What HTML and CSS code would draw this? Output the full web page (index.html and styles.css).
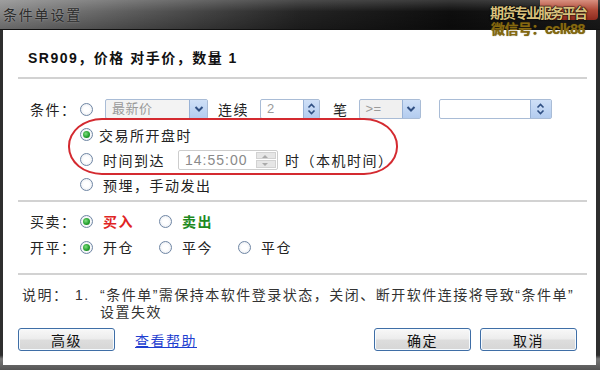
FILE: index.html
```html
<!DOCTYPE html>
<html lang="zh-CN">
<head>
  <meta charset="UTF-8">
  <title>条件单设置</title>
  <link rel="stylesheet" href="styles.css">
</head>
<body>
  <div class="window">
    <div class="titlebar">
      <span class="title">条件单设置</span>
      <span class="close-btn"></span>
      <div class="watermark">
        <div class="wm1">期货专业服务平台</div>
        <div class="wm2">微信号：cclk88</div>
      </div>
    </div>

    <div class="client">
      <div class="head">SR909，价格 对手价，数量 1</div>
      <div class="sep"></div>

      <!-- 条件 -->
      <div class="cond">
        <div class="row row-first">
          <span class="label">条件：</span>
          <span class="radio"></span>
          <span class="select select-price">
            <span class="val">最新价</span>
            <span class="drop">
              <svg width="10" height="8" viewBox="0 0 10 8"><path d="M1.5 2 L5 5.5 L8.5 2" fill="none" stroke="#2f4f82" stroke-width="2"/></svg>
            </span>
          </span>
          <span class="txt t-lianxu">连续</span>
          <span class="spin spin-count">
            <span class="val">2</span>
            <span class="spin-btn">
              <svg width="9" height="12" viewBox="0 0 9 12"><path d="M1.5 4.5 L4.5 1.5 L7.5 4.5 M1.5 7.5 L4.5 10.5 L7.5 7.5" fill="none" stroke="#2f4f82" stroke-width="1.6"/></svg>
            </span>
          </span>
          <span class="txt t-bi">笔</span>
          <span class="select select-op">
            <span class="val">&gt;=</span>
            <span class="drop">
              <svg width="10" height="8" viewBox="0 0 10 8"><path d="M1.5 2 L5 5.5 L8.5 2" fill="none" stroke="#2f4f82" stroke-width="2"/></svg>
            </span>
          </span>
          <span class="spin spin-price">
            <span class="val"></span>
            <span class="spin-btn">
              <svg width="9" height="12" viewBox="0 0 9 12"><path d="M1.5 4.5 L4.5 1.5 L7.5 4.5 M1.5 7.5 L4.5 10.5 L7.5 7.5" fill="none" stroke="#2f4f82" stroke-width="1.6"/></svg>
            </span>
          </span>
        </div>
        <div class="row indent">
          <span class="radio checked"></span>
          <span class="txt t-tight">交易所开盘时</span>
        </div>
        <div class="row indent">
          <span class="radio"></span>
          <span class="txt t-gap">时间到达</span>
          <span class="spin spin-time">
            <span class="val">14:55:00</span>
            <span class="spin-grey">
              <span class="up"></span>
              <span class="down"></span>
            </span>
          </span>
          <span class="txt t-local">时（本机时间）</span>
        </div>
        <div class="row indent">
          <span class="radio"></span>
          <span class="txt t-gap">预埋，手动发出</span>
        </div>
        <div class="highlight"></div>
      </div>
      <div class="sep"></div>

      <!-- 买卖 / 开平 -->
      <div class="dir">
        <div class="row">
          <span class="label">买卖：</span>
          <span class="opt"><span class="radio checked"></span><span class="txt buy">买入</span></span>
          <span class="opt"><span class="radio"></span><span class="txt sell">卖出</span></span>
        </div>
        <div class="row">
          <span class="label">开平：</span>
          <span class="opt"><span class="radio checked"></span><span class="txt">开仓</span></span>
          <span class="opt"><span class="radio"></span><span class="txt">平今</span></span>
          <span class="opt"><span class="radio"></span><span class="txt">平仓</span></span>
        </div>
      </div>
      <div class="sep"></div>

      <div class="note">
        <span class="note-label">说明：</span>
        <span class="note-num">1.</span>
        <span class="note-text">“条件单”需保持本软件登录状态，关闭、断开软件连接将导致“条件单”<br>设置失效</span>
      </div>

      <div class="actions">
        <button class="btn">高级</button>
        <a class="link" href="#">查看帮助</a>
        <span class="spacer"></span>
        <button class="btn">确定</button>
        <button class="btn btn-cancel">取消</button>
      </div>
    </div>
  </div>
</body>
</html>
```

FILE: styles.css
```css
body {
  margin: 0;
  padding: 0;
  font-family: "Liberation Sans", "Noto Sans CJK SC", sans-serif;
  background: #3a3a3a;
}
.window {
  width: 600px;
  height: 370px;
  position: relative;
  overflow: hidden;
  background: linear-gradient(#2e2e2e, #2e2e2e 96%, #777 97%, #555);
  display: flex;
  flex-direction: column;
}

/* 标题栏 */
.titlebar {
  flex: none;
  height: 30px;
  position: relative;
  box-sizing: border-box;
  border-bottom: 1px solid #111;
  background:
    linear-gradient(rgba(255, 255, 255, 0.18), rgba(255, 255, 255, 0) 40%, rgba(0, 0, 0, 0.25)),
    linear-gradient(90deg, #8a8a8a 0%, #5c5c5c 22%, #242424 50%, #0e0e0e 75%, #1c1c1c 100%);
}
.title {
  display: block;
  padding: 4px 0 0 3px;
  font-size: 14px;
  letter-spacing: 1.8px;
  color: #2c2c2c;
  text-shadow: 0 0 2px rgba(170, 170, 170, 0.9);
}
.close-btn {
  position: absolute;
  top: 0;
  right: 2px;
  width: 58px;
  height: 20px;
  border-radius: 0 0 4px 4px;
  background: linear-gradient(#d89080, #b04a38 50%, #8e2a1e);
}
.watermark {
  position: absolute;
  top: 5px;
  right: 12px;
  width: 100px;
  text-align: center;
  font-weight: bold;
  z-index: 2;
}
.wm1 {
  font-size: 14px;
  letter-spacing: -2px;
  line-height: 16px;
  color: #d8c07c;
  text-shadow: 0 0 1px #000, 0 0 1px #000, 0 0 2px #000;
}
.wm2 {
  font-size: 14px;
  letter-spacing: -0.5px;
  line-height: 16px;
  color: #86690f;
  text-shadow: 0 0 1px #5a4608;
}

/* 内容区 */
.client {
  flex: none;
  height: 335px;
  margin: 0 4px 0 3px;
  background: #fff;
  box-sizing: border-box;
  color: #222;
}
.head {
  height: 47px;
  padding: 7px 0 0 25px;
  box-sizing: border-box;
  display: flex;
  align-items: center;
  font-size: 14px;
  font-weight: bold;
  letter-spacing: 1.5px;
  color: #111;
}
.sep {
  height: 2px;
  margin: 0 9px 0 15px;
  background: #d2d2d2;
}
.row {
  display: flex;
  align-items: center;
  height: 25px;
  font-size: 14px;
  letter-spacing: 1.5px;
  white-space: nowrap;
}
.label {
  flex: none;
  width: 50px;
}
.indent {
  padding-left: 50px;
}

.cond {
  position: relative;
  padding: 17px 0 3px 27px;
}
.row-first {
  height: 26px;
}

/* 单选框 */
.radio {
  flex: none;
  width: 11px;
  height: 11px;
  border: 1px solid #6f86a4;
  border-radius: 50%;
  background: radial-gradient(circle, #fff 35%, #e2e6ec);
  position: relative;
}
.radio.checked::after {
  content: "";
  position: absolute;
  top: 2px;
  left: 2px;
  width: 7px;
  height: 7px;
  border-radius: 50%;
  background: radial-gradient(circle at 40% 40%, #7ee07e, #1f9a2a 60%, #17701f);
}

/* 下拉框、微调框 */
.select,
.spin {
  flex: none;
  display: flex;
  height: 20px;
  box-sizing: border-box;
  border: 1px solid #a9bcd6;
  border-radius: 2px;
  background: #fff;
  font-size: 13px;
  letter-spacing: 0.5px;
  color: #9a9a9a;
}
.val {
  flex: 1;
  padding-left: 6px;
  line-height: 18px;
  overflow: hidden;
}
.drop,
.spin-btn {
  flex: none;
  width: 17px;
  display: flex;
  align-items: center;
  justify-content: center;
  background: linear-gradient(#cfe0f7, #b3ccef);
  border-left: 1px solid #98b2d6;
}
.spin-btn {
  width: 15px;
}
.select-price {
  width: 103px;
  margin-left: 12px;
  background: #f3f3f3;
}
.t-lianxu {
  margin-left: 10px;
}
.spin-count {
  width: 60px;
  margin-left: 11px;
}
.t-bi {
  margin-left: 13px;
}
.select-op {
  width: 62px;
  margin-left: 10px;
  background: #f0f0f0;
}
.spin-price {
  width: 113px;
  margin-left: 18px;
}
.spin-price .spin-btn {
  width: 20px;
}
.spin-time {
  width: 100px;
  margin-left: 13px;
  border-color: #cdcdcd;
  font-size: 14px;
  letter-spacing: 1px;
  color: #8a8a8a;
}
.spin-grey {
  flex: none;
  width: 20px;
  display: flex;
  flex-direction: column;
  padding: 1px;
  gap: 1px;
}
.spin-grey span {
  flex: 1;
  background: #e6e6e6;
  border: 1px solid #d2d2d2;
  position: relative;
}
.spin-grey .up::after,
.spin-grey .down::after {
  content: "";
  position: absolute;
  left: 5px;
  border-left: 3px solid transparent;
  border-right: 3px solid transparent;
}
.spin-grey .up::after {
  top: 2px;
  border-bottom: 3px solid #aaa;
}
.spin-grey .down::after {
  top: 2px;
  border-top: 3px solid #aaa;
}
.t-tight {
  margin-left: 6px;
}
.t-gap {
  margin-left: 10px;
}
.t-local {
  margin-left: 7px;
}

/* 红色标注 */
.highlight {
  position: absolute;
  left: 65px;
  top: 39px;
  width: 330px;
  height: 57px;
  box-sizing: border-box;
  border: 2px solid #d42a30;
  border-radius: 34px / 28px;
}

/* 买卖 / 开平 */
.dir {
  padding: 6px 0 13px 27px;
}
.dir .row {
  height: 26px;
}
.opt {
  flex: none;
  width: 79px;
  display: flex;
  align-items: center;
}
.opt .txt {
  margin-left: 10px;
}
.buy {
  color: #e02424;
  font-weight: bold;
}
.sell {
  color: #1e8a1e;
  font-weight: bold;
}

/* 说明 */
.note {
  display: flex;
  padding: 12px 0 0 19px;
  font-size: 14px;
  line-height: 17px;
  letter-spacing: 1.5px;
  color: #333;
  white-space: nowrap;
}
.note-label {
  width: 53px;
  flex: none;
}
.note-num {
  width: 25px;
  flex: none;
}

/* 按钮 */
.actions {
  display: flex;
  align-items: center;
  margin-top: 7px;
  padding: 0 19px 0 15px;
}
.btn {
  flex: none;
  width: 97px;
  height: 23px;
  padding: 0;
  border: 1px solid #3f6ea6;
  border-radius: 3px;
  background: linear-gradient(#f8f8f8, #ececec 48%, #dddddd 52%, #d6d6d6);
  box-shadow: inset 0 0 0 1px #f6fbff;
  font-family: inherit;
  font-size: 14px;
  letter-spacing: 1.5px;
  color: #111;
  cursor: pointer;
}
.btn-cancel {
  margin-left: 9px;
}
.link {
  margin-left: 20px;
  font-size: 14px;
  letter-spacing: 1.5px;
  color: #1f3fd0;
  text-decoration: underline;
}
.spacer {
  flex: 1;
}
```
